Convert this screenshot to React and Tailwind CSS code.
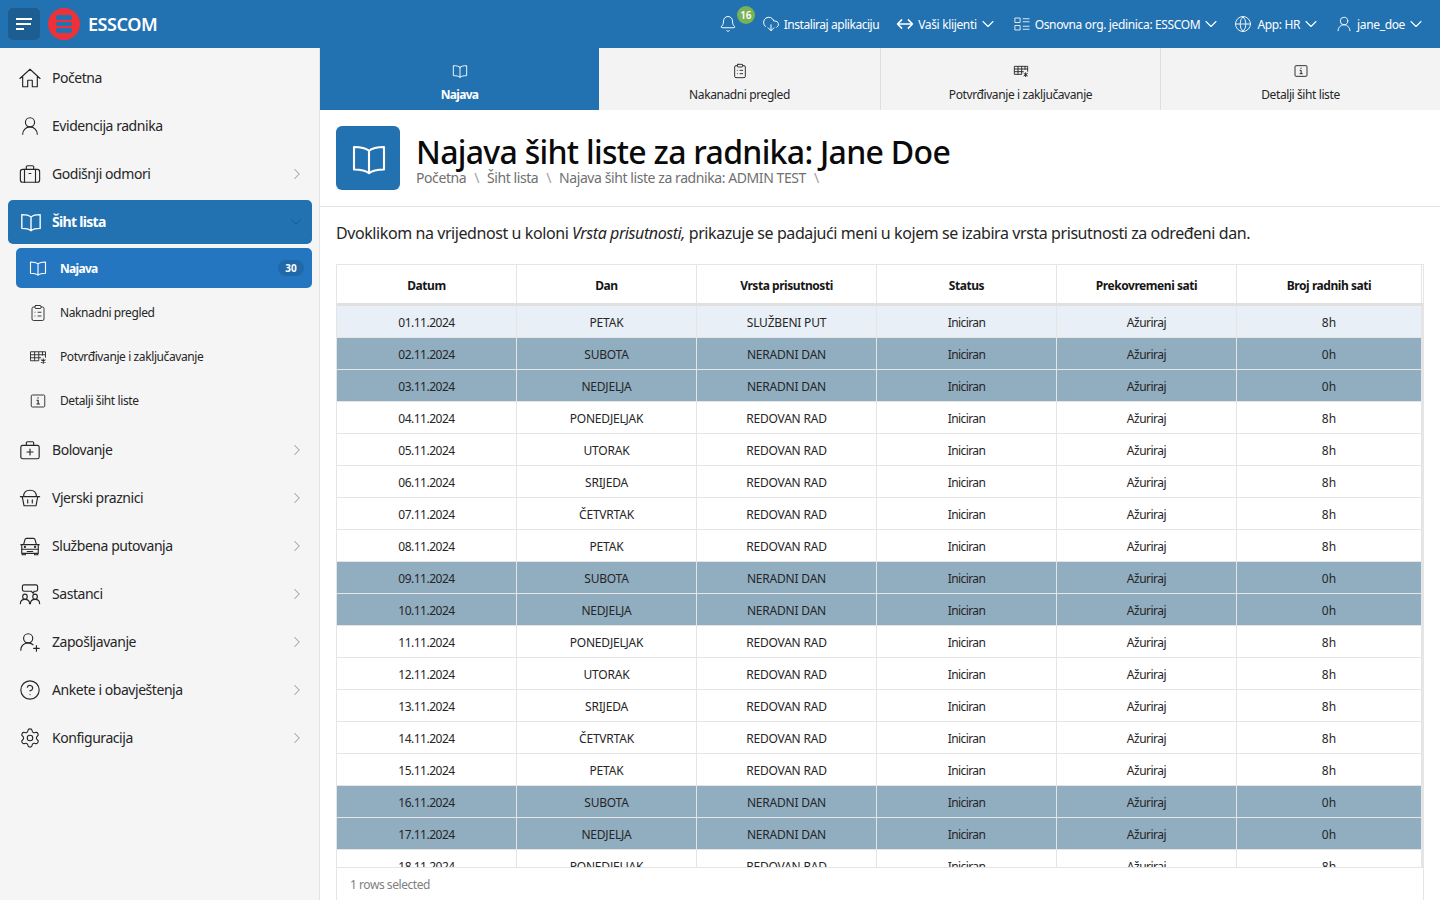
import React from "react";
import { UserRound, ClipboardList, UserRoundPlus, CircleHelp, Settings, CloudDownload, Bell, ChevronDown, ChevronRight, Globe } from "lucide-react";

const Svg = ({ children, strokeWidth = 1.25, ...p }) => (
  <svg viewBox="0 0 24 24" fill="none" stroke="currentColor" strokeWidth={strokeWidth} strokeLinecap="round" strokeLinejoin="round" {...p}>
    {children}
  </svg>
);
const Home = (p) => (
  <Svg {...p}>
    <path d="M1 12.500 12 2.500l11 10M4 10v11.500h5.500V14.500h5v7H20V10" />
  </Svg>
);
const Case = (p) => (
  <Svg {...p}>
    <rect x="1.500" y="7" width="21" height="14" rx="2.500" />
    <path d="M8 7V4.200C8 3.500 8.500 3 9.200 3h5.600c.7 0 1.200.5 1.200 1.200V7M6 7v14M18 7v14M11 11.500h2" />
  </Svg>
);
const MedCase = (p) => (
  <Svg {...p}>
    <rect x="2" y="7" width="20" height="14.500" rx="2" />
    <path d="M8 7V4.200C8 3.500 8.500 3 9.200 3h5.600c.7 0 1.200.5 1.200 1.200V7M12 11v6.500M8.700 14.200h6.600" />
  </Svg>
);
const Basket = (p) => (
  <Svg {...p}>
    <path d="M5 10.500C5 6 8 3.500 12 3.500s7 2.500 7 7M1.500 10.500h21M3.500 10.500 5.500 20.500h13l2-10M9.500 14v3.500M14.500 14v3.500" />
  </Svg>
);
const Car = (p) => (
  <Svg {...p}>
    <path d="M5 10.500 6.500 5c.2-.8.800-1.300 1.600-1.300h7.800c.8 0 1.400.5 1.600 1.300L19 10.500M2 10.500h20M3 10.500V20h18v-9.500M2.800 15.500h18.400M3.500 20v1.500h3.500V20M17 20v1.500h3.500V20M9 18h6" />
    <circle cx="6.500" cy="13" r=".6" />
    <circle cx="17.500" cy="13" r=".6" />
  </Svg>
);
const TableStar = (p) => (
  <Svg {...p} strokeLinecap="butt">
    <path d="M13 17H2V5h20v8M2 9h20M2 13h14M7.500 5v12M13 5v12M18 5v5" />
    <path d="M19 14v7M16 15.500l6 4M22 15.500l-6 4" strokeWidth="1.500" />
  </Svg>
);
const InfoBox = (p) => (
  <Svg {...p} strokeLinecap="butt">
    <rect x="3" y="4" width="18" height="16" rx="1.500" />
    <path d="M12 7v1.800M10 11h2.200v5M10 16h4.500" strokeWidth="1.500" />
  </Svg>
);
const Meeting = (p) => (
  <Svg {...p}>
    <path d="M5.500 2h13c1 0 1.800.8 1.800 1.800v3.400c0 1-.8 1.800-1.800 1.800h-2l-1 2.200-2-2.200H5.500c-1 0-1.800-.8-1.800-1.800V3.800C3.700 2.800 4.500 2 5.500 2Z" />
    <path d="M4 15c0-1.500 1-2.800 2.500-2.800S9 13.500 9 15s-1 2.800-2.500 2.800S4 16.500 4 15ZM15 15c0-1.500 1-2.800 2.500-2.800S20 13.500 20 15s-1 2.800-2.500 2.800S15 16.500 15 15Z" />
    <path d="M1.500 22.500c0-3 2-4.700 5-4.700s5 1.700 5 4.700M12.500 22.500c0-3 2-4.700 5-4.700s5 1.700 5 4.700" />
  </Svg>
);
const OrgList = (p) => (
  <Svg {...p} strokeLinecap="butt">
    <rect x="2.500" y="4" width="7" height="6" />
    <rect x="2.500" y="14" width="7" height="6" />
    <path d="M13 5h9M13 9h9M13 15h9M13 19h9" />
  </Svg>
);
const Arrows = (p) => (
  <Svg {...p} strokeWidth={2}>
    <path d="M7.500 6.500 2 12l5.500 5.500M16.500 6.500 22 12l-5.500 5.500M2 12h20" />
  </Svg>
);
const Book = (p) => (
  <Svg strokeWidth={1.5} {...p}>
    <path d="M12 6.500C10 4.800 7 4 2 4v15c5 0 8 .8 10 2.500 2-1.700 5-2.500 10-2.500V4c-5 0-8 .8-10 2.500ZM12 6.500v15" />
  </Svg>
);

const nav1 = [
  { t: "Početna", I: Home },
  { t: "Evidencija radnika", I: UserRound },
  { t: "Godišnji odmori", I: Case, c: true },
];
const subs = [
  { t: "Naknadni pregled", I: ClipboardList },
  { t: "Potvrđivanje i zaključavanje", I: TableStar },
  { t: "Detalji šiht liste", I: InfoBox },
];
const nav2 = [
  { t: "Bolovanje", I: MedCase },
  { t: "Vjerski praznici", I: Basket },
  { t: "Službena putovanja", I: Car },
  { t: "Sastanci", I: Meeting },
  { t: "Zapošljavanje", I: UserRoundPlus },
  { t: "Ankete i obavještenja", I: CircleHelp },
  { t: "Konfiguracija", I: Settings },
];

const dayNames = ["PETAK", "SUBOTA", "NEDJELJA", "PONEDJELJAK", "UTORAK", "SRIJEDA", "ČETVRTAK"];
const rows = Array.from({ length: 18 }, (_, i) => {
  const d = dayNames[i % 7];
  const off = d === "SUBOTA" || d === "NEDJELJA";
  return {
    date: `${String(i + 1).padStart(2, "0")}.11.2024`,
    d,
    off,
    first: i === 0,
    type: i === 0 ? "SLUŽBENI PUT" : off ? "NERADNI DAN" : "REDOVAN RAD",
    h: off ? "0h" : "8h",
  };
});
const heads = ["Datum", "Dan", "Vrsta prisutnosti", "Status", "Prekovremeni sati", "Broj radnih sati"];
const grid = "grid grid-cols-[180px_180px_180px_180px_180px_185px]";
const track = ["tracking-[-0.5px]", "tracking-[-0.2px]", "tracking-[-0.2px]", "tracking-[-0.6px]", "tracking-[-0.5px]", "tracking-[0px]"];

function NavRow({ t, I, c }) {
  return (
    <div className="flex h-12 items-center pl-[19px] pr-[13px] text-[14px] tracking-[-0.45px] text-[#262626]">
      <I className="mr-[11px] h-[22px] w-[22px] shrink-0 text-[#262626]" strokeWidth={1.25} />
      <span className="flex-1 pb-[1px]">{t}</span>
      {c && <ChevronRight className="h-[18px] w-[18px] text-[#a3a3a3]" strokeWidth={1.4} />}
    </div>
  );
}

function Tab({ t, I, active, w }) {
  return (
    <div className={`flex flex-col items-center ${w} ${active ? "bg-[#2271b1] font-bold tracking-[-0.7px] text-white" : "border-r border-[#dedede] bg-[#f3f3f3] tracking-[-0.4px] text-[#262626]"}`}>
      <I className="mt-[15px] h-4 w-4" strokeWidth={1.4} />
      <span className="mt-[8px] text-[12px] leading-[16px]">{t}</span>
    </div>
  );
}

function HeadText({ children }) {
  return <span className="pt-[2px]">{children}</span>;
}

export default function App() {
  return (
    <div className="flex h-screen flex-col overflow-hidden bg-white font-['Noto_Sans','Open_Sans',sans-serif] text-[#262626]">
      <header className="flex h-12 shrink-0 items-center bg-[#2271b1] pl-2 pr-[14px] text-white">
        <div className="flex h-8 w-8 flex-col justify-center gap-[3px] rounded-[5px] bg-[#1c5d92] pl-2">
          <span className="h-[2px] w-4 bg-white" />
          <span className="h-[2px] w-[15px] bg-white" />
          <span className="h-[2px] w-[8px] bg-white" />
        </div>
        <div className="ml-2 flex h-8 w-8 flex-col items-center justify-center gap-[2px] rounded-full bg-[#ee3139]">
          <span className="h-[5px] w-[16px] rounded-[2px] bg-[#2271b1]" />
          <span className="h-[4px] w-[16px] rounded-[2px] bg-[#2271b1]" />
          <span className="h-[5px] w-[16px] rounded-[2px] bg-[#2271b1]" />
        </div>
        <span className="ml-2 text-[18px] font-semibold tracking-[-0.45px]">ESSCOM</span>
        <div className="ml-auto flex items-center text-[12px] tracking-[-0.35px]">
          <div className="relative mr-[25px]">
            <Bell className="h-[18px] w-[18px]" strokeWidth={1.3} />
            <span className="absolute -top-[9px] left-[18px] flex h-[18px] w-[18px] items-center justify-center rounded-full bg-[#78b256] text-[10px] font-semibold">16</span>
          </div>
          <CloudDownload className="mr-[4px] h-[18px] w-[18px]" strokeWidth={1.3} />
          <span className="pt-[2px] tracking-[-0.45px]">Instaliraj aplikaciju</span>
          <Arrows className="ml-[17px] mr-[4px] h-[18px] w-[18px]" />
          <HeadText>Vaši klijenti</HeadText>
          <ChevronDown className="ml-[1px] h-[20px] w-[20px]" strokeWidth={1.3} />
          <OrgList className="ml-[15px] mr-[4px] h-[18px] w-[18px]" strokeWidth={1.1} />
          <HeadText>Osnovna org. jedinica: ESSCOM</HeadText>
          <ChevronDown className="ml-[1px] h-[20px] w-[20px]" strokeWidth={1.3} />
          <Globe className="ml-[13px] mr-[5px] h-[18px] w-[18px]" strokeWidth={1.2} />
          <HeadText>App: HR</HeadText>
          <ChevronDown className="ml-[1px] h-[20px] w-[20px]" strokeWidth={1.3} />
          <UserRound className="ml-[14px] mr-[4px] h-[18px] w-[18px]" strokeWidth={1.2} />
          <HeadText>jane_doe</HeadText>
          <ChevronDown className="ml-[1px] h-[20px] w-[20px]" strokeWidth={1.3} />
        </div>
      </header>

      <div className="flex min-h-0 flex-1">
        <aside className="flex w-[320px] shrink-0 flex-col border-r border-[#e2e2e2] bg-[#f5f5f5] pl-2 pr-[7px] pt-[6px]">
          <div className="-ml-2 -mr-[7px]">
            {nav1.map((n) => <NavRow key={n.t} {...n} />)}
          </div>
          <div className="mt-[2px] flex h-[44px] items-center rounded-[5px] bg-[#2271b1] pl-[12px] pr-[7px] text-[14px] font-bold tracking-[-0.7px] text-white">
            <Book className="mr-[10px] h-[22px] w-[22px]" />
            <span className="flex-1 pb-[1px]">Šiht lista</span>
            <ChevronDown className="h-[18px] w-[18px] text-[#1c5d92]" strokeWidth={1.4} />
          </div>
          <div className="ml-2 mt-[4px] flex h-[40px] items-center rounded-[5px] bg-[#2476c0] pl-[13px] pr-[8px] text-[12px] font-bold tracking-[-0.7px] text-white">
            <Book className="mr-[13px] h-[18px] w-[18px]" />
            <span className="flex-1 pt-[1px]">Najava</span>
            <span className="flex h-[16px] w-[26px] items-center justify-center rounded-full bg-[#2069a8] text-[10px] tracking-normal">30</span>
          </div>
          <div className="mt-[3px]">
            {subs.map(({ t, I }) => (
              <div key={t} className="ml-2 flex h-[44px] items-center pl-[13px] text-[12px] tracking-[-0.4px] text-[#262626]">
                <I className="mr-[13px] h-[18px] w-[18px]" strokeWidth={1.2} />
                <span>{t}</span>
              </div>
            ))}
          </div>
          <div className="-ml-2 -mr-[7px] mt-[3px]">
            {nav2.map((n) => <NavRow key={n.t} {...n} c />)}
          </div>
        </aside>

        <main className="flex min-w-0 flex-1 flex-col">
          <div className="flex h-[62px] shrink-0">
            <Tab t="Najava" I={Book} active w="w-[279px]" />
            <Tab t="Nakanadni pregled" I={ClipboardList} w="w-[282px]" />
            <Tab t="Potvrđivanje i zaključavanje" I={TableStar} w="w-[280px]" />
            <Tab t="Detalji šiht liste" I={InfoBox} w="w-[279px] border-r-0" />
          </div>
          <div className="flex h-[97px] shrink-0 items-center border-b border-[#e5e5e5] pb-[1px] pl-4">
            <div className="flex h-16 w-16 items-center justify-center rounded-[6px] bg-[#2271b1] pl-[1px] pt-[2px] text-white">
              <Book className="h-[36px] w-[36px]" strokeWidth={1.4} />
            </div>
            <div className="ml-4 pt-[4px]">
              <h1 className="text-[32px] font-medium leading-[37px] tracking-[-0.7px] text-[#0a0a0a]">Najava šiht liste za radnika: Jane Doe</h1>
              <div className="flex text-[14px] leading-[16px] tracking-[-0.42px] text-[#707070]">
                <span>Početna</span>
                <span className="mx-2 text-[#a0a0a0]">\</span>
                <span>Šiht lista</span>
                <span className="mx-2 text-[#a0a0a0]">\</span>
                <span>Najava šiht liste za radnika: ADMIN TEST</span>
                <span className="mx-2 text-[#a0a0a0]">\</span>
              </div>
            </div>
          </div>
          <p className="mx-4 mt-[14px] h-[43px] shrink-0 text-[16px] leading-[24px] tracking-[-0.42px] text-[#262626]">
            Dvoklikom na vrijednost u koloni <em>Vrsta prisutnosti,</em> prikazuje se padajući meni u kojem se izabira vrsta prisutnosti za određeni dan.
          </p>
          <div className="mx-4 flex min-h-0 flex-1 flex-col border-x border-t border-[#e5e5e5]">
            <div className={`${grid} h-[41px] shrink-0 border-b-[3px] border-[#e0e0e0]`}>
              {heads.map((h) => (
                <div key={h} className="flex items-center justify-center border-r border-[#e5e5e5] pt-[4px] text-[12px] font-bold tracking-[-0.45px] text-[#161616]">{h}</div>
              ))}
            </div>
            <div className="min-h-0 flex-1 overflow-hidden border-r-[2px] border-[#e5e5e5]">
              {rows.map((r) => (
                <div key={r.date} className={`${grid} h-[32px] border-b border-[#e5e5e5] ${r.off ? "bg-[#91adc0]" : r.first ? "bg-[#e8eff6]" : "bg-white"}`}>
                  {[r.date, r.d, r.type, "Iniciran", "Ažuriraj", r.h].map((v, i) => (
                    <div key={i} className={`flex items-center justify-center border-r border-[#e5e5e5] pt-[3px] text-[12px] text-[#262626] ${track[i]}`}>{v}</div>
                  ))}
                </div>
              ))}
            </div>
            <div className="flex h-[33px] shrink-0 items-center border-t border-[#e5e5e5] bg-white pl-[13px] pt-[2px] text-[12px] tracking-[-0.45px] text-[#808080]">1 rows selected</div>
          </div>
        </main>
      </div>
    </div>
  );
}
